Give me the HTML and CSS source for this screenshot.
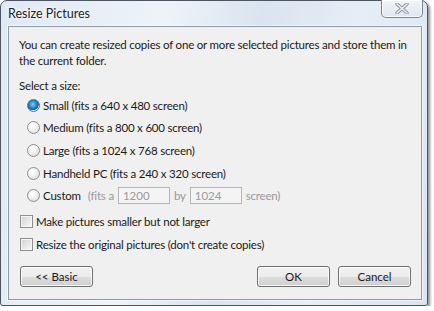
FILE: index.html
```html
<!DOCTYPE html>
<html lang="en">
<head>
  <meta charset="UTF-8">
  <title>Resize Pictures</title>
  <link rel="stylesheet" href="styles.css">
</head>
<body>
  <div class="window">
    <div class="titlebar">
      <span class="title">Resize Pictures</span>
      <button class="close" title="Close">
        <svg width="14" height="11" viewBox="0 0 14 11">
          <path d="M2 1 L12 10 M12 1 L2 10" stroke="#8d939b" stroke-width="3.4" stroke-linecap="round"/>
          <path d="M2 1 L12 10 M12 1 L2 10" stroke="#eef1f4" stroke-width="1.6" stroke-linecap="round"/>
        </svg>
      </button>
    </div>

    <div class="client">
      <p class="intro">You can create resized copies of one or more selected pictures and store them in the current folder.</p>

      <div class="group-label">Select a size:</div>

      <div class="sizes">
        <label class="option"><input type="radio" name="size" checked><span>Small (fits a 640 x 480 screen)</span></label>
        <label class="option"><input type="radio" name="size"><span>Medium (fits a 800 x 600 screen)</span></label>
        <label class="option"><input type="radio" name="size"><span>Large (fits a 1024 x 768 screen)</span></label>
        <label class="option"><input type="radio" name="size"><span>Handheld PC (fits a 240 x 320 screen)</span></label>
        <div class="option custom">
          <label class="custom-label"><input type="radio" name="size"><span>Custom</span></label>
          <span class="muted">(fits a</span>
          <input class="dim" value="1200" disabled>
          <span class="muted">by</span>
          <input class="dim" value="1024" disabled>
          <span class="muted">screen)</span>
        </div>
      </div>

      <div class="checks">
        <label class="check"><input type="checkbox"><span>Make pictures smaller but not larger</span></label>
        <label class="check"><input type="checkbox"><span>Resize the original pictures (don't create copies)</span></label>
      </div>

      <div class="buttons">
        <button class="btn">&lt;&lt; Basic</button>
        <div class="right-buttons">
          <button class="btn">OK</button>
          <button class="btn">Cancel</button>
        </div>
      </div>
    </div>
  </div>
</body>
</html>
```

FILE: styles.css
```css
:root {
  --client-bg: #f0f0f0;
  --text-color: #1a1a1a;
  --muted-color: #9a9a9a;
  --frame-border: #4c5561;
}

body {
  margin: 0;
  background: #ffffff;
  font-family: 'Lato', 'Liberation Sans', sans-serif;
  font-size: 11.5px;
  letter-spacing: -0.2px;
  color: var(--text-color);
}

.window {
  width: 428px;
  height: 306px;
  box-sizing: border-box;
  border: 1px solid var(--frame-border);
  border-radius: 7px 7px 3px 3px;
  background: linear-gradient(100deg, #dfe9f4 0%, #eef3f9 35%, #d9e4f0 55%, #e6edf6 75%, #dbe5f1 100%);
  box-shadow: 2px 2px 3px rgba(0, 0, 0, 0.45);
  display: flex;
  flex-direction: column;
}

.titlebar {
  height: 25px;
  display: flex;
  align-items: flex-start;
  padding-left: 7px;
}

.title {
  margin-top: 5px;
  font-size: 12.5px;
  letter-spacing: 0;
  color: #222;
  text-shadow: 0 0 6px #fff, 0 0 3px #fff;
}

.close {
  margin-left: auto;
  margin-right: 4px;
  margin-top: -1px;
  width: 42px;
  height: 18px;
  padding: 0;
  border: 1px solid #7a8594;
  border-top: none;
  border-radius: 0 0 5px 5px;
  background: linear-gradient(#f2f5f9, #dfe6ee);
  box-shadow: inset 0 0 0 1px rgba(255, 255, 255, 0.7);
  display: flex;
  align-items: center;
  justify-content: center;
}

.client {
  margin: 0 5px 0 7px;
  height: 274px;
  box-sizing: border-box;
  background: var(--client-bg);
  border: 1px solid #8e99a6;
  box-shadow: 0 0 0 1px rgba(255, 255, 255, 0.6);
  padding: 10px 10px 0 10px;
}

.intro {
  margin: 0;
  line-height: 16px;
  width: 404px;
}

.group-label {
  margin-top: 9px;
  line-height: 16px;
}

.sizes {
  display: flex;
  flex-direction: column;
  gap: 6.7px;
  margin-top: 3px;
  padding-left: 8px;
}

.option,
.check,
.custom-label {
  display: flex;
  align-items: center;
  height: 16px;
  gap: 3px;
}

.custom {
  gap: 4px;
}

.custom .custom-label {
  margin-right: 3px;
}

input[type="radio"] {
  appearance: none;
  margin: 0;
  width: 13px;
  height: 13px;
  border-radius: 50%;
  border: 1px solid #8e8f8f;
  background: radial-gradient(circle at 40% 35%, #ffffff 0%, #f0f0f0 45%, #d2d2d2 100%);
}

input[type="radio"]:checked {
  background:
    radial-gradient(circle at 45% 40%, #8fd0f5 0%, #2c8ed1 35%, #1b5e93 62%, transparent 66%),
    radial-gradient(circle at 40% 35%, #ffffff 0%, #f0f0f0 45%, #d2d2d2 100%);
  border-color: #3d7bad;
}

input[type="checkbox"] {
  appearance: none;
  margin: 0;
  width: 13px;
  height: 13px;
  border: 1px solid #8e8f8f;
  background: linear-gradient(135deg, #d0d0d0 0%, #e8e8e8 55%, #fafafa 100%);
  box-shadow: inset 0 0 0 1px #f6f6f6;
}

.muted {
  color: var(--muted-color);
}

.dim {
  width: 52px;
  height: 17px;
  box-sizing: border-box;
  border: 1px solid #b6b6b6;
  background: #f4f4f4;
  padding: 0 4px;
  font: inherit;
  color: var(--muted-color);
}

.checks {
  display: flex;
  flex-direction: column;
  gap: 7px;
  margin-top: 10px;
  padding-left: 1px;
}

.buttons {
  display: flex;
  justify-content: space-between;
  margin-top: 13px;
  padding-left: 1px;
}

.right-buttons {
  display: flex;
  gap: 8px;
}

.btn {
  width: 73px;
  height: 21px;
  padding: 0;
  border: 1px solid #707070;
  border-radius: 3px;
  background: linear-gradient(#f2f2f2 0%, #ebebeb 50%, #dddddd 51%, #cfcfcf 100%);
  box-shadow: inset 0 0 0 1px rgba(255, 255, 255, 0.8);
  font: inherit;
  letter-spacing: 0;
  color: var(--text-color);
}
```
